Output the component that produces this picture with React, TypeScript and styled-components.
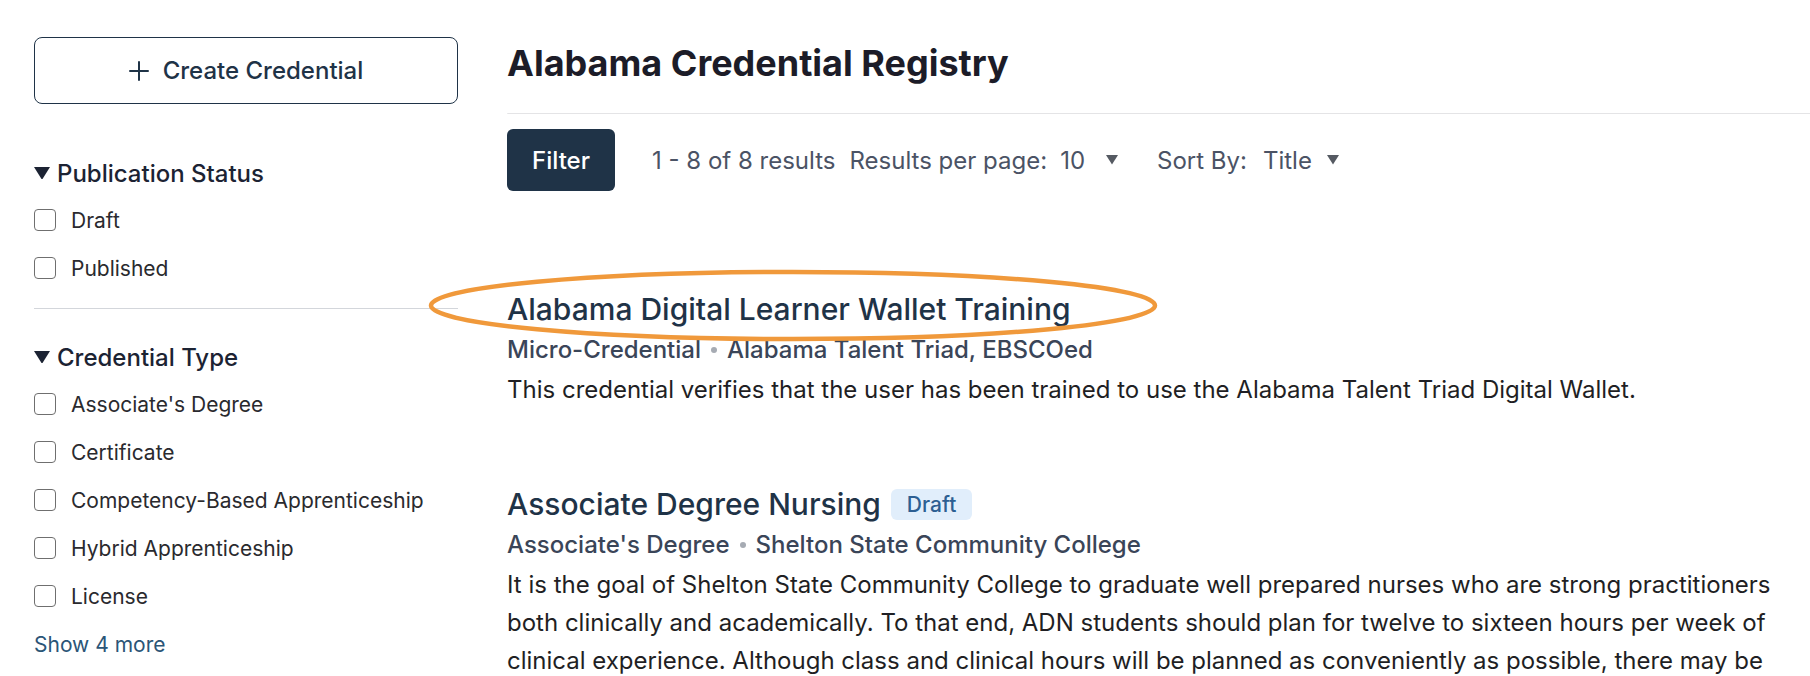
import React from "react";
import styled, { createGlobalStyle } from "styled-components";

const GlobalStyle = createGlobalStyle`
  html, body {
    margin: 0;
    padding: 0;
    background: #ffffff;
    font-family: Inter, "Noto Sans", "Liberation Sans", sans-serif;
    color: #1f1f24;
    overflow: hidden;
  }
  * { box-sizing: border-box; }
`;

const Page = styled.div`
  display: flex;
  align-items: flex-start;
  gap: 49px;
  padding: 37px 0 0 34px;
  width: 1810px;
  height: 676px;
  overflow: hidden;
`;

const Sidebar = styled.aside`
  width: 424px;
  flex-shrink: 0;
  display: flex;
  flex-direction: column;
`;

const CreateButton = styled.button`
  height: 67px;
  width: 100%;
  border: 1.5px solid #1f3347;
  border-radius: 8px;
  background: #ffffff;
  color: #1f3347;
  font-family: inherit;
  font-size: 24px;
  font-weight: 500;
  display: flex;
  align-items: center;
  justify-content: center;
  gap: 14px;
  cursor: pointer;
`;

const FilterGroup = styled.section<{ $first?: boolean }>`
  display: flex;
  flex-direction: column;
  padding-top: ${(p) => (p.$first ? "56px" : "35px")};
  padding-bottom: 16px;
  border-bottom: ${(p) => (p.$first ? "1px solid #d3d6db" : "none")};
`;

const GroupHeader = styled.div`
  display: flex;
  align-items: center;
  gap: 7px;
  height: 26px;
  font-size: 24px;
  font-weight: 500;
  color: #1c2333;
  margin-bottom: 10px;
`;

const CheckRow = styled.label`
  display: flex;
  align-items: center;
  gap: 15px;
  height: 48px;
  font-size: 21px;
  color: #2a2a2e;
  cursor: pointer;
`;

const Box = styled.input`
  appearance: none;
  -webkit-appearance: none;
  width: 22px;
  height: 22px;
  margin: 0;
  border: 1.5px solid #6f6f6f;
  border-radius: 4px;
  background: #fff;
  flex-shrink: 0;
`;

const ShowMore = styled.a`
  display: flex;
  align-items: center;
  height: 48px;
  font-size: 21px;
  color: #2b5577;
  text-decoration: none;
  cursor: pointer;
`;

const Main = styled.main`
  flex: 1;
  min-width: 0;
  display: flex;
  flex-direction: column;
`;

const Heading = styled.h1`
  margin: 4px 0 0;
  font-size: 36px;
  line-height: 44px;
  font-weight: 700;
  color: #1c1c28;
`;

const Divider = styled.hr`
  margin: 28px 0 0;
  border: none;
  border-top: 1px solid #e4e4e6;
  border-top-left-radius: 6px;
`;

const Toolbar = styled.div`
  display: flex;
  align-items: center;
  margin-top: 15px;
  height: 62px;
  font-size: 24px;
  color: #4b5365;
`;

const FilterButton = styled.button`
  width: 108px;
  height: 62px;
  border: none;
  border-radius: 6px;
  background: #1f3347;
  color: #ffffff;
  font-family: inherit;
  font-size: 24px;
  font-weight: 500;
  margin-right: 37px;
  cursor: pointer;
`;

const ToolText = styled.span<{ $gap?: number }>`
  margin-right: ${(p) => p.$gap ?? 0}px;
  white-space: nowrap;
`;

const Select = styled.span<{ $gap?: number; $caretGap: number }>`
  display: inline-flex;
  align-items: center;
  gap: ${(p) => p.$caretGap}px;
  color: #4b5365;
  font-size: 24px;
  margin-right: ${(p) => p.$gap ?? 0}px;
`;

const Results = styled.div`
  display: flex;
  flex-direction: column;
  margin-top: 97px;
  gap: 74px;
`;

const Item = styled.article`
  position: relative;
  display: flex;
  flex-direction: column;
  max-width: 1292px;
`;

const TitleRow = styled.div`
  display: flex;
  align-items: center;
  gap: 10px;
`;

const ItemTitle = styled.a`
  font-size: 30px;
  line-height: 42px;
  font-weight: 500;
  color: #1f3347;
  text-decoration: none;
`;

const Badge = styled.span`
  display: inline-flex;
  align-items: center;
  height: 31px;
  padding: 0 16px;
  border-radius: 6px;
  background: #e1eefb;
  color: #2d5f92;
  font-size: 21px;
  font-weight: 500;
`;

const Meta = styled.div`
  display: flex;
  align-items: center;
  gap: 10px;
  font-size: 24px;
  line-height: 40px;
  font-weight: 500;
  color: #3a4558;
`;

const Dot = styled.span`
  width: 6px;
  height: 6px;
  border-radius: 50%;
  background: #a6abb3;
`;

const Description = styled.p`
  margin: 1px 0 0;
  font-size: 24px;
  line-height: 38px;
  color: #1f1f24;
`;

const Highlight = styled.svg`
  position: absolute;
  left: -80px;
  top: -20px;
  pointer-events: none;
`;

const Caret = ({ size = 14, color = "#1c2333" }: { size?: number; color?: string }) => (
  <svg width={size} height={size * 0.8} viewBox="0 0 10 8" aria-hidden>
    <path d="M0 0 L10 0 L5 8 Z" fill={color} />
  </svg>
);

const PlusIcon = () => (
  <svg width="20" height="20" viewBox="0 0 20 20" aria-hidden>
    <path d="M10 1 V19 M1 10 H19" stroke="#1f3347" strokeWidth="2" strokeLinecap="round" />
  </svg>
);

const pubStatus = ["Draft", "Published"];
const credTypes = [
  "Associate's Degree",
  "Certificate",
  "Competency-Based Apprenticeship",
  "Hybrid Apprenticeship",
  "License",
];

export default function App() {
  return (
    <>
      <GlobalStyle />
      <Page>
        <Sidebar>
          <CreateButton>
            <PlusIcon />
            Create Credential
          </CreateButton>
          <FilterGroup $first>
            <GroupHeader>
              <Caret size={16} />
              Publication Status
            </GroupHeader>
            {pubStatus.map((s) => (
              <CheckRow key={s}>
                <Box type="checkbox" />
                {s}
              </CheckRow>
            ))}
          </FilterGroup>
          <FilterGroup>
            <GroupHeader>
              <Caret size={16} />
              Credential Type
            </GroupHeader>
            {credTypes.map((s) => (
              <CheckRow key={s}>
                <Box type="checkbox" />
                {s}
              </CheckRow>
            ))}
            <ShowMore>Show 4 more</ShowMore>
          </FilterGroup>
        </Sidebar>
        <Main>
          <Heading>Alabama Credential Registry</Heading>
          <Divider />
          <Toolbar>
            <FilterButton>Filter</FilterButton>
            <ToolText $gap={14}>1 - 8 of 8 results</ToolText>
            <ToolText $gap={13}>Results per page:</ToolText>
            <Select $gap={39} $caretGap={21}>
              <span>10</span>
              <Caret size={12} color="#555a62" />
            </Select>
            <ToolText $gap={16}>Sort By:</ToolText>
            <Select $caretGap={15}>
              <span>Title</span>
              <Caret size={12} color="#555a62" />
            </Select>
          </Toolbar>
          <Results>
            <Item>
              <Highlight width="732" height="76" viewBox="0 0 732 76">
                <ellipse cx="366" cy="37.5" rx="362" ry="33.5" fill="none" stroke="#f0993b" strokeWidth="4.5" />
              </Highlight>
              <TitleRow>
                <ItemTitle>Alabama Digital Learner Wallet Training</ItemTitle>
              </TitleRow>
              <Meta>
                <span>Micro-Credential</span>
                <Dot />
                <span>Alabama Talent Triad, EBSCOed</span>
              </Meta>
              <Description>
                This credential verifies that the user has been trained to use the Alabama Talent Triad Digital Wallet.
              </Description>
            </Item>
            <Item>
              <TitleRow>
                <ItemTitle>Associate Degree Nursing</ItemTitle>
                <Badge>Draft</Badge>
              </TitleRow>
              <Meta>
                <span>Associate's Degree</span>
                <Dot />
                <span>Shelton State Community College</span>
              </Meta>
              <Description>
                It is the goal of Shelton State Community College to graduate well prepared nurses who are strong
                practitioners both clinically and academically. To that end, ADN students should plan for twelve to
                sixteen hours per week of clinical experience. Although class and clinical hours will be planned as
                conveniently as possible, there may be times when students will need to adjust their work schedules.
              </Description>
            </Item>
          </Results>
        </Main>
      </Page>
    </>
  );
}
